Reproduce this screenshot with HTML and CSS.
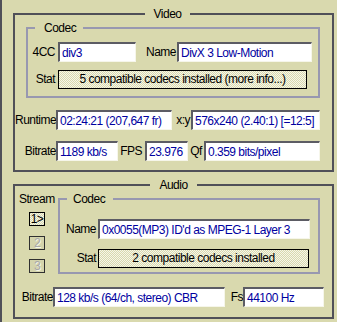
FILE: index.html
```html
<!DOCTYPE html>
<html lang="en">
<head>
  <meta charset="UTF-8">
  <title>Stream info</title>
  <link rel="stylesheet" href="styles.css">
</head>
<body>
  <div class="frame">
    <fieldset class="group video">
      <legend>Video</legend>
      <fieldset class="sub vcodec">
        <legend>Codec</legend>
        <div class="row">
          <span class="lbl w25">4CC</span>
          <div class="field f-4cc">div3</div>
          <span class="lbl w40">Name</span>
          <div class="field f-vname">DivX 3 Low-Motion</div>
        </div>
        <div class="row gap7">
          <span class="lbl w25">Stat</span>
          <div class="stat s-video">5 compatible codecs installed (more info...)</div>
        </div>
      </fieldset>
      <div class="row gap12">
        <span class="lbl w41">Runtime</span>
        <div class="field f-runtime">02:24:21 (207,647 fr)</div>
        <span class="lbl w19">x:y</span>
        <div class="field f-xy">576x240 (2.40:1) [=12:5]</div>
      </div>
      <div class="row gap11">
        <span class="lbl w41">Bitrate</span>
        <div class="field f-vbitrate">1189 kb/s</div>
        <span class="lbl w27">FPS</span>
        <div class="field f-fps">23.976</div>
        <span class="lbl w16">Qf</span>
        <div class="field f-qf">0.359 bits/pixel</div>
      </div>
    </fieldset>

    <fieldset class="group audio">
      <legend>Audio</legend>
      <div class="amain">
        <div class="stream">
          <span class="stream-lbl">Stream</span>
          <div class="sbtn on">1&gt;</div>
          <div class="sbtn">2</div>
          <div class="sbtn">3</div>
        </div>
        <fieldset class="sub acodec">
          <legend>Codec</legend>
          <div class="row">
            <span class="lbl w36">Name</span>
            <div class="field f-aname">0x0055(MP3) ID'd as MPEG-1 Layer 3</div>
          </div>
          <div class="row gap9">
            <span class="lbl w36">Stat</span>
            <div class="stat s-audio">2 compatible codecs installed</div>
          </div>
        </fieldset>
      </div>
      <div class="row gap13">
        <span class="lbl w38">Bitrate</span>
        <div class="field f-abitrate">128 kb/s (64/ch, stereo) CBR</div>
        <span class="lbl w18">Fs</span>
        <div class="field f-fs">44100 Hz</div>
      </div>
    </fieldset>
  </div>
</body>
</html>
```

FILE: styles.css
```css
* {
  box-sizing: border-box;
}
body {
  margin: 0;
  background-color: #d9d9ae;
  font-family: "Liberation Sans", Arial, sans-serif;
  font-size: 12px;
  line-height: 14px;
  letter-spacing: -0.5px;
  color: #000;
}
.frame {
  border-left: 2px solid #505058;
  height: 322px;
  padding: 7px 0 0 11px;
}
fieldset {
  margin: 0;
  padding: 0;
  min-width: 0;
}
legend {
  line-height: 14px;
}
.group {
  width: 321px;
  border: 2px solid #505058;
}
.group > legend {
  margin: 0 auto;
  padding: 0 9px;
}
.video {
  padding: 0 12px 9px 0;
}
.audio {
  margin-top: 6px;
  padding: 0 0 10px 0;
}
.sub {
  border: 2px solid #9898b0;
}
.vcodec {
  margin-left: 11px;
  padding: 7px 0 7px 2px;
}
.vcodec > legend {
  margin-left: 5px;
  padding: 0 7px 0 9px;
}
.row {
  display: flex;
  align-items: center;
  height: 20px;
}
.gap7 { margin-top: 7px; }
.gap9 { margin-top: 9px; }
.gap11 { margin-top: 11px; }
.gap12 { margin-top: 12px; }
.gap13 { margin-top: 13px; }

.lbl {
  text-align: right;
  white-space: nowrap;
  flex: none;
}
.w16 { width: 16px; text-align: center; }
.w18 { width: 18px; }
.w19 { width: 19px; padding-right: 1px; }
.w25 { width: 25px; margin-right: 3px; }
.w27 { width: 27px; padding-right: 3px; }
.w36 { width: 36px; margin-right: 2px; }
.w38 { width: 38px; }
.w40 { width: 40px; margin-right: 1px; }
.w41 { width: 41px; }

.field {
  flex: none;
  height: 20px;
  display: flex;
  align-items: center;
  padding-left: 2px;
  background-color: #fff;
  color: #0000a0;
  white-space: nowrap;
  overflow: hidden;
  border-style: solid;
  border-width: 2px 1px 1px 2px;
  border-color: #5c5c64 #f6f6ea #f6f6ea #5c5c64;
}
.f-4cc { width: 78px; }
.f-vname { width: 135px; }
.f-runtime { width: 116px; }
.f-xy { width: 129px; }
.f-vbitrate { width: 62px; }
.f-fps { width: 43px; }
.f-qf { width: 116px; }
.f-aname { width: 212px; }
.f-abitrate { width: 172px; }
.f-fs { width: 81px; }

.stat {
  flex: none;
  height: 19px;
  border: 1px solid #000;
  background: repeating-conic-gradient(#f6f6ea 0 25%, #d9d9ae 0 50%) 0 0 / 2px 2px;
  display: flex;
  align-items: center;
  justify-content: center;
  white-space: nowrap;
}
.s-video { width: 249px; }
.s-audio { width: 211px; }

.amain {
  display: flex;
}
.stream {
  width: 43px;
  flex: none;
}
.stream-lbl {
  display: block;
  padding-left: 4px;
}
.sbtn {
  width: 16px;
  height: 14px;
  margin: 9px 0 0 14px;
  border: 1px solid #303030;
  background-color: #d4d4ac;
  color: #a8a8a8;
  text-shadow: 1px 1px #f6f6ea;
  font-size: 12px;
  line-height: 12px;
  text-align: center;
}
.sbtn.on {
  margin-top: 6px;
  border-color: #000;
  color: #000;
  text-shadow: none;
  background: repeating-conic-gradient(#f6f6ea 0 25%, #d9d9ae 0 50%) 0 0 / 2px 2px;
}
.sbtn + .sbtn {
  margin-top: 10px;
}
.sbtn + .sbtn + .sbtn {
  margin-top: 9px;
}
.acodec {
  width: 262px;
  flex: none;
  padding: 13px 0 4px 0;
}
.acodec > legend {
  margin-left: 7px;
  padding: 0 8px 0 6px;
}
```
